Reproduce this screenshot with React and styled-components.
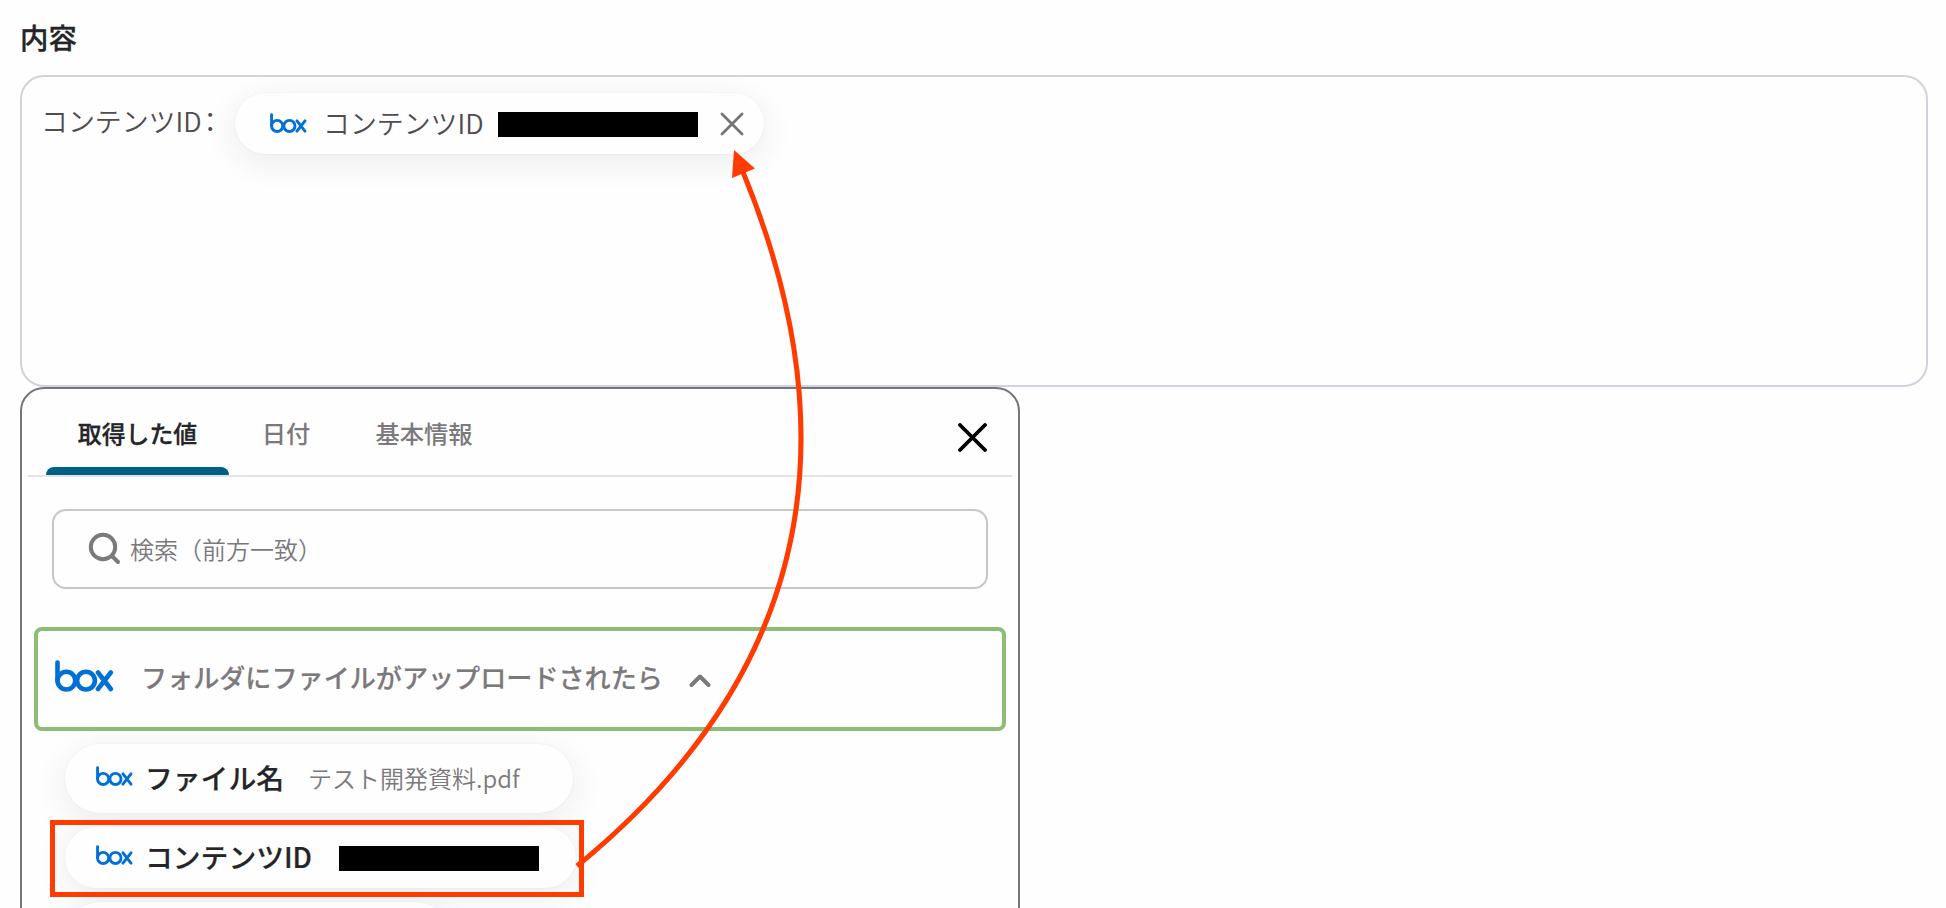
import React from "react";
import styled, { createGlobalStyle } from "styled-components";

const GlobalStyle = createGlobalStyle`
  * {
    box-sizing: border-box;
  }

  body {
    margin: 0;
    background: #fefefe;
    font-family: "Noto Sans CJK JP", sans-serif;
    overflow: hidden;
  }
`;

const Page = styled.main`
  position: relative;
  height: 908px;
  padding: 0 18px 0 20px;
  overflow: hidden;
`;

const FieldLabel = styled.h2`
  margin: 0;
  height: 75px;
  line-height: 73px;
  font-size: 28.4px;
  font-weight: 500;
  -webkit-text-stroke: 0.3px;
  color: #252528;
`;

const Editor = styled.div`
  display: flex;
  align-items: flex-start;
  height: 312px;
  padding: 16px 22px;
  border: 2px solid #cfd3df;
  border-radius: 24px;
`;

const EditorText = styled.span`
  width: 194px;
  margin-left: -3px;
  line-height: 55px;
  font-size: 26.9px;
  font-weight: 350;
  color: #4f4d50;
  white-space: nowrap;

  .colon {
    margin-left: 2px;
    font-feature-settings: "palt";
  }
`;

const Token = styled.div`
  display: flex;
  align-items: center;
  width: 529px;
  height: 61px;
  padding: 1px 0 0 35px;
  border-radius: 31px;
  background: #fefefe;
  box-shadow: 0 8px 32px rgba(60, 40, 80, 0.09), 0 0 2px rgba(60, 40, 80, 0.08);
  font-size: 26.9px;
  font-weight: 350;
  color: #4f4d50;
  white-space: nowrap;

  .name {
    width: 175px;
    margin: -3px 0 0 16px;
  }

  .remove {
    margin-left: 22px;
  }
`;

const Redacted = styled.div`
  flex: none;
  width: 200px;
  height: 25px;
  margin-top: 1px;
  background: #000;
`;

const Panel = styled.section`
  width: 1000px;
  height: 560px;
  border: 2px solid #75757a;
  border-radius: 24px;
`;

const Tabs = styled.nav`
  display: flex;
  height: 88px;
  margin: 0 6px;
  padding: 0 25px 0 18px;
  border-bottom: 2px solid #e4e4e8;

  .close {
    margin: 34px 0 0 auto;
  }
`;

const Tab = styled.div`
  display: flex;
  flex-direction: column;
  justify-content: space-between;
  align-items: center;
  width: ${props => props.$width}px;
  line-height: 88px;
  font-size: ${props => (props.$active ? 23.9 : 24.3)}px;
  font-weight: 500;
  -webkit-text-stroke: ${props => (props.$active ? "0.3px" : "0")};
  color: ${props => (props.$active ? "#252528" : "#7b797c")};
  white-space: nowrap;

  &::after {
    content: "";
    display: ${props => (props.$active ? "block" : "none")};
    flex: none;
    width: 183px;
    height: 8px;
    margin-top: -10px;
    border-radius: 8px 8px 0 0;
    background: #006085;
  }
`;

const Search = styled.div`
  display: flex;
  align-items: center;
  width: 936px;
  height: 80px;
  margin: 32px 0 0 30px;
  padding: 0 0 2px 34px;
  border: 2px solid #c6c6c8;
  border-radius: 14px;
  font-size: 24px;
  font-weight: 350;
  color: #7b797c;

  svg {
    margin-right: 9px;
  }
`;

const Group = styled.div`
  display: flex;
  align-items: center;
  width: 972px;
  height: 104px;
  margin: 38px 0 13px 12px;
  padding: 0 0 4px 17px;
  border: 4px solid #8cbd77;
  border-radius: 8px;
  font-size: 26.1px;
  font-weight: 500;
  -webkit-text-stroke: 0.2px;
  color: #7b797c;
  white-space: nowrap;

  .title {
    width: 520px;
    margin-left: 27px;
  }

  .chevron {
    margin: 8px 0 0 28px;
  }
`;

const Item = styled.div`
  display: flex;
  align-items: center;
  width: ${props => props.$width}px;
  height: ${props => props.$height || 69}px;
  margin: 0 0 14px 43px;
  padding: 0 0 3px 31px;
  border-radius: 35px;
  background: #fefefe;
  box-shadow: 0 8px 32px rgba(60, 40, 80, 0.09), 0 0 2px rgba(60, 40, 80, 0.08);
  white-space: nowrap;

  .name {
    width: ${props => props.$nameWidth}px;
    margin-left: 12px;
    font-size: 27.8px;
    font-weight: 500;
    -webkit-text-stroke: 0.2px;
    color: #252528;
  }

  .sample {
    font-size: 24px;
    font-weight: 350;
    color: #7b797c;
  }

  ${Redacted} {
    margin-top: 5px;
  }
`;

const Highlight = styled.div`
  position: absolute;
  left: 50px;
  top: 820px;
  width: 534px;
  height: 77px;
  border: 5px solid #ff3b00;
`;

const ArrowLayer = styled.svg`
  position: absolute;
  left: 0;
  top: 0;
  pointer-events: none;
`;

const Logo = styled.svg`
  flex: none;
  margin-bottom: 2px;
`;

const BoxLogo = ({ width }) => (
  <Logo width={width} height={(width * 32) / 59} viewBox="0 0 59 32" fill="none" stroke="#006fd6" strokeWidth="4.6" strokeLinecap="round">
    <path d="M2.5 2.5V20.5" />
    <circle cx="11.4" cy="20.6" r="8.9" />
    <circle cx="31" cy="20.6" r="8.9" />
    <path d="M43 12.5 55.8 29M55.8 12.5 43 29" />
  </Logo>
);

const Cross = ({ size, stroke, color, className }) => (
  <svg className={className} width={size} height={size} viewBox={`0 0 ${size} ${size}`} stroke={color} strokeWidth={stroke} strokeLinecap="round">
    <path d={`M2 2 ${size - 2} ${size - 2}M${size - 2} 2 2 ${size - 2}`} />
  </svg>
);

const App = () => (
  <Page>
    <GlobalStyle />
    <FieldLabel>内容</FieldLabel>
    <Editor>
      <EditorText>
        コンテンツID<span className="colon">：</span>
      </EditorText>
      <Token>
        <BoxLogo width={37} />
        <span className="name">コンテンツID</span>
        <Redacted />
        <Cross className="remove" size={24} stroke={2.8} color="#757376" />
      </Token>
    </Editor>
    <Panel>
      <Tabs>
        <Tab $active $width={183}>取得した値</Tab>
        <Tab $width={114}>日付</Tab>
        <Tab $width={162}>基本情報</Tab>
        <Cross className="close" size={29} stroke={3.8} color="#000" />
      </Tabs>
      <Search>
        <svg width="33" height="33" viewBox="0 0 33 33" fill="none" stroke="#7b797c" strokeWidth="4" strokeLinecap="round">
          <circle cx="15" cy="15" r="12.2" />
          <path d="m24 24 6 6" />
        </svg>
        検索（前方一致）
      </Search>
      <Group>
        <BoxLogo width={59} />
        <span className="title">フォルダにファイルがアップロードされたら</span>
        <svg className="chevron" width="22" height="14" viewBox="0 0 22 14" fill="none" stroke="#7b797c" strokeWidth="4" strokeLinecap="round" strokeLinejoin="round">
          <path d="m2.5 11 8.5-8.5 8.5 8.5" />
        </svg>
      </Group>
      <Item $width={508} $nameWidth={163}>
        <BoxLogo width={37} />
        <span className="name">ファイル名</span>
        <span className="sample">テスト開発資料.pdf</span>
      </Item>
      <Item $width={511} $height={61} $nameWidth={194}>
        <BoxLogo width={37} />
        <span className="name">コンテンツID</span>
        <Redacted />
      </Item>
      <Item $width={385} />
    </Panel>
    <Highlight />
    <ArrowLayer width="1946" height="908" viewBox="0 0 1946 908">
      <path d="M577 866Q915 590 743 172" fill="none" stroke="#ff3b00" strokeWidth="5" />
      <path d="M734 150 755 168.5 732 178Z" fill="#ff3b00" />
    </ArrowLayer>
  </Page>
);

export default App;
